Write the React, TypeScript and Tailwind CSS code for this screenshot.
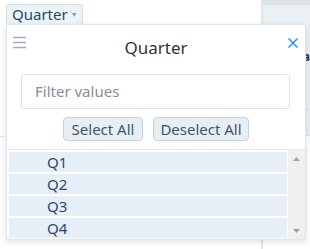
export default function App() {
  const values = ["Q1", "Q2", "Q3", "Q4"]

  return (
    <div className="relative h-[249px] w-[310px] overflow-hidden bg-white font-['Noto_Sans',sans-serif]">
      {/* pivot table behind the popup */}
      <div className="flex h-full">
        <div className="flex w-[262px] flex-col">
          <div className="ml-[6px] mt-[4px] flex h-[20px] w-[77px] items-center gap-[3px] rounded-t-[3px] border border-b-0 border-[#d8dfe5] bg-[#edf2f5] pl-[5px] text-[15px] leading-none text-[#1d4a72]">
            Quarter
            <span className="text-[7px] text-[#8d99a5]">▼</span>
          </div>
          <div className="mt-[112px] border-t border-[#e3e8ec]" />
        </div>
        <div className="flex flex-1 flex-col border-l-2 border-[#e3e7ea]">
          <div className="h-[5px] bg-[#dde3e8]" />
          <div className="h-[105px] border-b border-[#dde3e8] bg-[#ebf0f4] pl-[39px] pt-[45px] text-[13px] font-bold leading-none text-[#1d3557]">
            a
          </div>
          <div className="h-[26px] border-b border-[#dde3e8] bg-[#ebf0f4]" />
        </div>
      </div>

      {/* filter popup */}
      <div className="absolute left-[6px] top-[24px] flex h-[216px] w-[300px] flex-col border border-[#e1e5e9] bg-white shadow-[0_2px_6px_rgba(0,0,0,0.12)]">
        <div className="grid h-[49px] grid-cols-[40px_1fr_40px]">
          <div className="pl-[6px] pt-[11px]">
            <svg width="13" height="13" viewBox="0 0 13 13" className="block">
              <path d="M0 1.5h13M0 6.5h13M0 11.5h13" stroke="#9eadbf" strokeWidth="1.6" />
            </svg>
          </div>
          <div className="mt-[11px] h-[24px] text-center text-[17px] leading-[24px] text-[#333]">
            Quarter
          </div>
          <div className="flex justify-end pr-[7px] pt-[13px]">
            <svg width="10" height="10" viewBox="0 0 10 10" className="block">
              <path d="M0.5 0.5l9 9M9.5 0.5l-9 9" stroke="#2196f3" strokeWidth="1.5" />
            </svg>
          </div>
        </div>

        <div className="ml-[14px] flex h-[35px] w-[269px] items-center rounded-[3px] border border-[#dfe3e6] pl-[13px] text-[15px] text-[#868e96]">
          Filter values
        </div>

        <div className="mt-[8px] flex justify-center gap-[10px]">
          <button className="h-[24px] w-[80px] rounded-[4px] border border-[#c8d3dd] bg-[#e7eef4] text-[15px] leading-none text-[#415669]">
            Select All
          </button>
          <button className="h-[24px] w-[96px] rounded-[4px] border border-[#c8d3dd] bg-[#e7eef4] text-[15px] leading-none text-[#415669]">
            Deselect All
          </button>
        </div>

        <div className="mt-[8px] flex flex-1 border-t border-[#e1e5e9]">
          <div className="flex w-[280px] flex-col gap-[2px] pl-[2px] pt-[2px]">
            {values.map((v) => (
              <div
                key={v}
                className="flex h-[20px] items-center bg-[#e6eef7] pl-[38px] text-[15px] leading-none text-[#2d4a68]"
              >
                {v}
              </div>
            ))}
          </div>
          <div className="ml-[1px] flex flex-1 flex-col items-center justify-between bg-[#f0f0f0] pb-[6px] pt-[7px]">
            <svg width="7" height="4" viewBox="0 0 7 4" className="block">
              <path d="M3.5 0L7 4H0z" fill="#a3a3a3" />
            </svg>
            <svg width="7" height="4" viewBox="0 0 7 4" className="block">
              <path d="M0 0h7L3.5 4z" fill="#a3a3a3" />
            </svg>
          </div>
        </div>
      </div>
    </div>
  )
}
